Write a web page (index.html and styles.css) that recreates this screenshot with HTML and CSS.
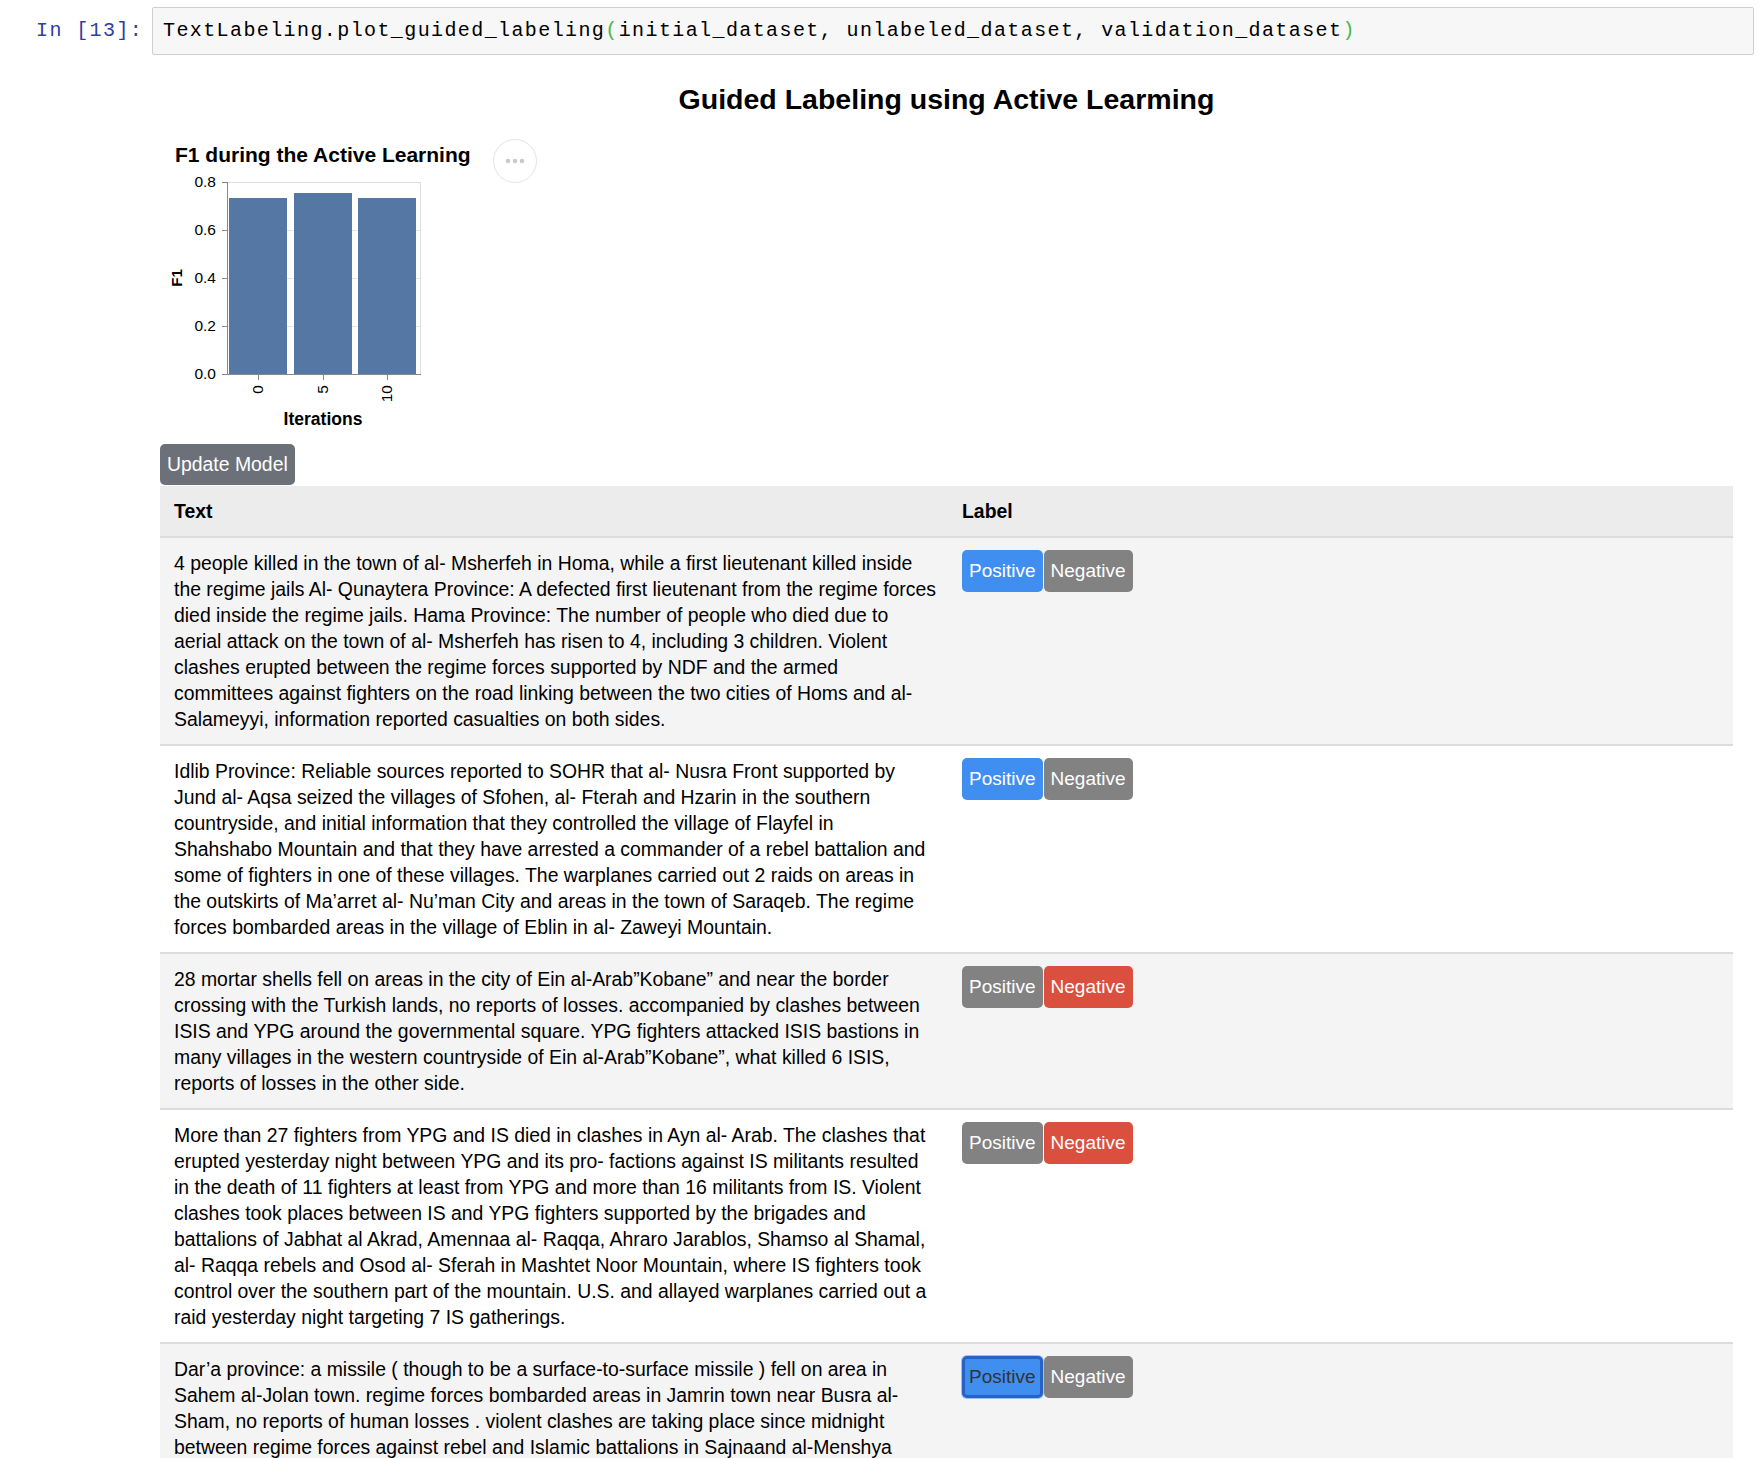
FILE: index.html
```html
<!DOCTYPE html>
<html lang="en">
<head>
<meta charset="utf-8">
<title>Guided Labeling</title>
<link rel="stylesheet" href="styles.css">
</head>
<body>
<div class="cell">
  <div class="prompt">In&nbsp;[13]:</div>
  <div class="input">TextLabeling.plot_guided_labeling<span class="paren">(</span>initial_dataset, unlabeled_dataset, validation_dataset<span class="paren">)</span></div>
</div>

<div class="output">
  <h1 class="title">Guided Labeling using Active Learming</h1>

  <div class="chart-row">
    <svg class="chart" width="330" height="320" viewBox="0 0 330 320" xmlns="http://www.w3.org/2000/svg">
      <text x="15" y="42" class="c-title">F1 during the Active Learning</text>
      <g class="grid">
        <line x1="67" y1="62.5" x2="260" y2="62.5"/>
        <line x1="67" y1="110.5" x2="260" y2="110.5"/>
        <line x1="67" y1="158.5" x2="260" y2="158.5"/>
        <line x1="67" y1="206.5" x2="260" y2="206.5"/>
      </g>
      <rect x="67.5" y="62.5" width="193" height="192" class="frame"/>
      <g class="bars">
        <rect x="69" y="78" width="58" height="176"/>
        <rect x="134" y="73" width="58" height="181"/>
        <rect x="198" y="78" width="58" height="176"/>
      </g>
      <g class="axis">
        <line x1="67.5" y1="62" x2="67.5" y2="255"/>
        <line x1="67" y1="254.5" x2="261" y2="254.5"/>
        <line x1="62" y1="62.5" x2="67" y2="62.5"/>
        <line x1="62" y1="110.5" x2="67" y2="110.5"/>
        <line x1="62" y1="158.5" x2="67" y2="158.5"/>
        <line x1="62" y1="206.5" x2="67" y2="206.5"/>
        <line x1="62" y1="254.5" x2="67" y2="254.5"/>
        <line x1="98.5" y1="254" x2="98.5" y2="260"/>
        <line x1="163.5" y1="254" x2="163.5" y2="260"/>
        <line x1="227.5" y1="254" x2="227.5" y2="260"/>
      </g>
      <g class="tick-labels">
        <text x="56" y="67">0.8</text>
        <text x="56" y="115">0.6</text>
        <text x="56" y="163">0.4</text>
        <text x="56" y="211">0.2</text>
        <text x="56" y="259">0.0</text>
      </g>
      <g class="x-labels">
        <text transform="translate(98,265) rotate(-90)" dy="0.35em">0</text>
        <text transform="translate(163,265) rotate(-90)" dy="0.35em">5</text>
        <text transform="translate(227,265) rotate(-90)" dy="0.35em">10</text>
      </g>
      <text x="163" y="305" class="x-title">Iterations</text>
      <text transform="translate(22,158) rotate(-90)" class="y-title">F1</text>
    </svg>
    <div class="actions">
      <svg width="20" height="6" viewBox="0 0 20 6" xmlns="http://www.w3.org/2000/svg">
        <circle cx="3" cy="3" r="2.3"/>
        <circle cx="10" cy="3" r="2.3"/>
        <circle cx="17" cy="3" r="2.3"/>
      </svg>
    </div>
  </div>

  <button class="update">Update Model</button>

  <table class="labels">
    <colgroup><col class="col-text"><col class="col-label"></colgroup>
    <thead>
      <tr><th class="t-text">Text</th><th class="t-label">Label</th></tr>
    </thead>
    <tbody>
      <tr class="odd">
        <td class="t-text">4 people killed in the town of al- Msherfeh in Homa, while a first lieutenant killed inside the regime jails Al- Qunaytera Province: A defected first lieutenant from the regime forces died inside the regime jails. Hama Province: The number of people who died due to aerial attack on the town of al- Msherfeh has risen to 4, including 3 children. Violent clashes erupted between the regime forces supported by NDF and the armed committees against fighters on the road linking between the two cities of Homs and al- Salameyyi, information reported casualties on both sides.</td>
        <td class="t-label"><div class="btns"><button class="lb pos">Positive</button><button class="lb off">Negative</button></div></td>
      </tr>
      <tr>
        <td class="t-text">Idlib Province: Reliable sources reported to SOHR that al- Nusra Front supported by Jund al- Aqsa seized the villages of Sfohen, al- Fterah and Hzarin in the southern countryside, and initial information that they controlled the village of Flayfel in Shahshabo Mountain and that they have arrested a commander of a rebel battalion and some of fighters in one of these villages. The warplanes carried out 2 raids on areas in the outskirts of Ma’arret al- Nu’man City and areas in the town of Saraqeb. The regime forces bombarded areas in the village of Eblin in al- Zaweyi Mountain.</td>
        <td class="t-label"><div class="btns"><button class="lb pos">Positive</button><button class="lb off">Negative</button></div></td>
      </tr>
      <tr class="odd">
        <td class="t-text">28 mortar shells fell on areas in the city of Ein al-Arab”Kobane” and near the border crossing with the Turkish lands, no reports of losses. accompanied by clashes between ISIS and YPG around the governmental square. YPG fighters attacked ISIS bastions in many villages in the western countryside of Ein al-Arab”Kobane”, what killed 6 ISIS, reports of losses in the other side.</td>
        <td class="t-label"><div class="btns"><button class="lb off">Positive</button><button class="lb neg">Negative</button></div></td>
      </tr>
      <tr>
        <td class="t-text">More than 27 fighters from YPG and IS died in clashes in Ayn al- Arab. The clashes that erupted yesterday night between YPG and its pro- factions against IS militants resulted in the death of 11 fighters at least from YPG and more than 16 militants from IS. Violent clashes took places between IS and YPG fighters supported by the brigades and battalions of Jabhat al Akrad, Amennaa al- Raqqa, Ahraro Jarablos, Shamso al Shamal, al- Raqqa rebels and Osod al- Sferah in Mashtet Noor Mountain, where IS fighters took control over the southern part of the mountain. U.S. and allayed warplanes carried out a raid yesterday night targeting 7 IS gatherings.</td>
        <td class="t-label"><div class="btns"><button class="lb off">Positive</button><button class="lb neg">Negative</button></div></td>
      </tr>
      <tr class="odd">
        <td class="t-text">Dar’a province: a missile ( though to be a surface-to-surface missile ) fell on area in Sahem al-Jolan town. regime forces bombarded areas in Jamrin town near Busra al- Sham, no reports of human losses . violent clashes are taking place since midnight between regime forces against rebel and Islamic battalions in Sajnaand al-Menshya</td>
        <td class="t-label"><div class="btns"><button class="lb pos focus">Positive</button><button class="lb off">Negative</button></div></td>
      </tr>
    </tbody>
  </table>
</div>
</body>
</html>
```

FILE: styles.css
```css
html {
  height: 1458px;
  overflow: hidden;
}
body {
  margin: 0;
  height: 1458px;
  overflow: hidden;
  background: #ffffff;
  color: #000000;
  font-family: "Liberation Sans", Arial, sans-serif;
}

/* code cell */
.cell {
  display: flex;
  align-items: flex-start;
  padding-top: 7px;
  font-family: "Liberation Mono", "Courier New", monospace;
  font-size: 20px;
  letter-spacing: 1.4px;
  line-height: 26px;
}
.prompt {
  color: #303f9f;
  padding-top: 11px;
  margin-left: 36px;
  width: 116px;
  white-space: nowrap;
}
.input {
  width: 1580px;
  background: #f7f7f7;
  border: 1px solid #cfcfcf;
  border-radius: 2px;
  padding: 10px 10px;
  white-space: nowrap;
  color: #000;
}
.paren {
  color: #44b944;
}

/* output */
.output {
  margin-left: 160px;
  width: 1573px;
}
.title {
  margin: 26px 0 0 0;
  font-size: 28.5px;
  line-height: 36px;
  font-weight: bold;
  text-align: center;
}
.chart-row {
  display: flex;
  align-items: flex-start;
  margin-top: 3px;
}
.chart {
  display: block;
  font-family: "Liberation Sans", Arial, sans-serif;
}
.c-title {
  font-size: 21px;
  font-weight: bold;
  fill: #000;
}
.grid line {
  stroke: #e4e4e4;
  stroke-width: 1;
}
.frame {
  fill: none;
  stroke: #dddddd;
  stroke-width: 1;
}
.bars rect {
  fill: #5477a4;
}
.axis line {
  stroke: #888888;
  stroke-width: 1;
}
.tick-labels text {
  font-size: 15.5px;
  text-anchor: end;
  fill: #000;
}
.x-labels text {
  font-size: 15.5px;
  text-anchor: end;
  fill: #000;
}
.x-title {
  font-size: 17.5px;
  font-weight: bold;
  text-anchor: middle;
}
.y-title {
  font-size: 15px;
  font-weight: bold;
  text-anchor: middle;
}
.actions {
  width: 44px;
  height: 44px;
  box-sizing: border-box;
  border: 1px solid #e4e4e4;
  border-radius: 50%;
  margin-top: 19px;
  margin-left: 3px;
  display: flex;
  align-items: center;
  justify-content: center;
}
.actions circle {
  fill: #cacaca;
}

.update {
  display: block;
  margin-top: 4px;
  height: 41px;
  padding: 0 7px;
  border: none;
  border-radius: 5px;
  background: #6c7179;
  color: #ffffff;
  font-family: "Liberation Sans", Arial, sans-serif;
  font-size: 19.4px;
  line-height: 41px;
}

/* table */
.labels {
  margin-top: 1px;
  width: 1573px;
  border-collapse: collapse;
  table-layout: fixed;
  font-size: 19.4px;
  line-height: 26px;
}
.col-text {
  width: 788px;
}
.labels thead tr {
  background: #ececec;
}
.labels th {
  text-align: left;
  font-weight: bold;
  padding: 12px 14px;
  border-bottom: 2px solid #dcdcdc;
}
.labels td {
  vertical-align: top;
  border-bottom: 2px solid #dcdcdc;
}
.labels td.t-text {
  padding: 12px 12px 12px 14px;
}
.labels td.t-label {
  padding: 12px 14px;
}
.labels tbody tr {
  background: #ffffff;
}
.labels tbody tr.odd {
  background: #f4f4f4;
}
.btns {
  display: flex;
  gap: 1px;
}
.lb {
  box-sizing: border-box;
  height: 42px;
  padding: 0 7px;
  border: none;
  border-radius: 5px;
  color: #ffffff;
  font-family: "Liberation Sans", Arial, sans-serif;
  font-size: 19px;
  line-height: 42px;
}
.lb.pos {
  background: #418ef1;
}
.lb.off {
  background: #828282;
}
.lb.neg {
  background: #db4f3e;
}
.lb.focus {
  color: #333333;
  border: 3px solid #2762c6;
  line-height: 36px;
  padding: 0 4px;
  box-shadow: 0 0 0 1px #9cc2f3;
}
```
